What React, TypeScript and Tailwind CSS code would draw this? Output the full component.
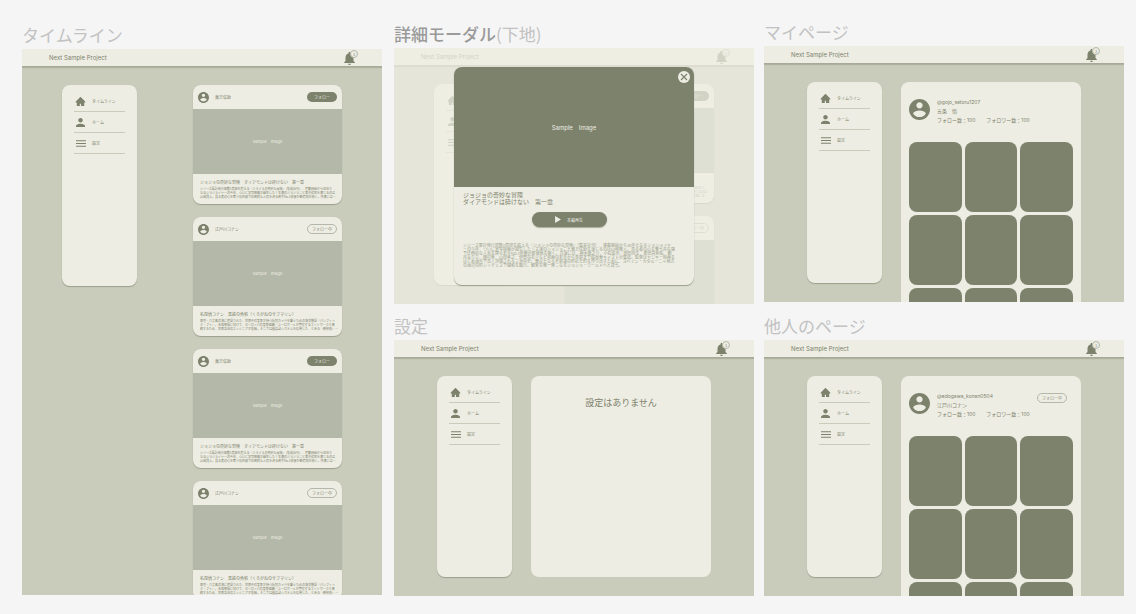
import type { ReactNode } from "react";
import { AiFillHome } from "react-icons/ai";

const JOJO_TITLE = "ジョジョの奇妙な冒険　ダイアモンドは砕けない　第一章";
const JOJO_LEAD =
  "シリーズ累計発行部数1億部を超える『ジョジョの奇妙な冒険』（集英社刊）、連載開始から30年と\nなるジョジョイヤーの今年、ついに実写映画が誕生した！主演のジョジョこと東方仗助を演じるのは\n山﨑賢人。見る者の心を奪う存在感で圧倒的な人気を誇る若手No.1俳優が新境地を開く。共演には…";
const JOJO_FULL =
  "シリーズ累計発行部数1億部を超える『ジョジョの奇妙な冒険』（集英社刊）、連載開始から30年となるジョジョイヤーの今年、ついに実写映画が誕生した！主演のジョジョこと東方仗助を演じるのは山﨑賢人。見る者の心を奪う存在感で圧倒的な人気を誇る若手No.1俳優が新境地を開く。共演には、神木隆之介、小松菜奈、岡田将生、新田真剣佑、観月ありさ、國村隼、山田孝之、伊勢谷友介など邦画の若手から重鎮まで超豪華キャストが集結。監督はヤンキー映画をはじめ海外で高く評価される三池崇史。舞台となる不思議の町杜王町を作り出すために、スペイン・カタルーニャ地方の海辺の町シッチェスで撮影を敢行。観客を唯一無二なるジョジョ・ワールドへと誘う。";
const CONAN_TITLE = "名探偵コナン　黒鉄の魚影（くろがねのサブマリン）";
const CONAN_LEAD =
  "東京・八丈島近海に建設された、世界中の警察が持つ防犯カメラを繋ぐための海洋施設『パシフィッ\nク・ブイ』。本格稼働に向けて、ヨーロッパの警察組織・ユーロポールが管理するネットワークと接\n続するため、世界各国のエンジニアが集結。そこでは顔認証システムを応用した、とある『新技術』…";

type Post = { user: string; following: boolean; title?: string; lead?: string };

const jojo: Post = { user: "東方仗助", following: false, title: JOJO_TITLE, lead: JOJO_LEAD };
const conan: Post = { user: "江戸川コナン", following: true, title: CONAN_TITLE, lead: CONAN_LEAD };
const posts: Post[] = [jojo, conan, jojo, conan];
const backdropPosts: Post[] = [jojo, { user: "江戸川コナン", following: true }];

function AvatarIcon({ className }: { className: string }) {
  return (
    <svg viewBox="2 2 20 20" fill="currentColor" className={className} aria-hidden="true">
      <path d="M12 2C6.48 2 2 6.48 2 12s4.48 10 10 10 10-4.48 10-10S17.52 2 12 2zm0 3c1.66 0 3 1.34 3 3s-1.34 3-3 3-3-1.34-3-3 1.34-3 3-3zm0 14.2a7.2 7.2 0 0 1-6-3.22c.03-1.99 4-3.08 6-3.08 1.99 0 5.97 1.09 6 3.08a7.2 7.2 0 0 1-6 3.22z" />
    </svg>
  );
}

function PersonIcon() {
  return (
    <svg viewBox="4 4 16 16" fill="currentColor" className="size-[9px]" aria-hidden="true">
      <path d="M12 12c2.21 0 4-1.79 4-4s-1.79-4-4-4-4 1.79-4 4 1.79 4 4 4zm0 2c-2.67 0-8 1.34-8 4v2h16v-2c0-2.66-5.33-4-8-4z" />
    </svg>
  );
}

function MenuIcon() {
  return (
    <svg viewBox="3 6 18 12" fill="currentColor" className="h-[7px] w-[10px]" aria-hidden="true">
      <path d="M3 18h18v-2H3v2zm0-5h18v-2H3v2zm0-7v2h18V6H3z" />
    </svg>
  );
}

function BellIcon() {
  return (
    <svg viewBox="4 2.5 16 19.5" fill="currentColor" className="h-[13px] w-[11px]" aria-hidden="true">
      <path d="M12 22c1.1 0 2-.9 2-2h-4c0 1.1.89 2 2 2zm6-6v-5c0-3.07-1.64-5.64-4.5-6.32V4c0-.83-.67-1.5-1.5-1.5s-1.5.67-1.5 1.5v.68C7.63 5.36 6 7.92 6 11v5l-2 2v1h16v-1l-2-2z" />
    </svg>
  );
}

function Board({ title, tall, children }: { title: ReactNode; tall?: boolean; children: ReactNode }) {
  return (
    <section className="flex flex-col gap-[3px]">
      <h2 className="h-5 text-[17px] leading-[18px] whitespace-nowrap text-[#c2c2c2]">{title}</h2>
      <div
        className={
          tall
            ? "relative aspect-[360/546] overflow-hidden bg-[#c9ccbb]"
            : "relative aspect-[360/256] overflow-hidden bg-[#c9ccbb]"
        }
      >
        {children}
      </div>
    </section>
  );
}

function Header() {
  return (
    <header className="flex h-[18px] items-center justify-between border-b border-[#a7aa99] bg-[#edede3] px-[27px] shadow-[0_1px_1px_rgba(125,130,109,0.35)]">
      <a href="#top" className="font-[Inter,sans-serif] text-[6px] leading-[8px]">
        Next Sample Project
      </a>
      <button type="button" aria-label="通知" className="relative flex w-[11px] pt-[2px]">
        <BellIcon />
        <span className="absolute top-0 left-[6px] flex size-2 items-center justify-center rounded-full border border-[#b4b8a8] bg-[#edede3] text-[4px] leading-none">
          1
        </span>
      </button>
    </header>
  );
}

function SideItem({ icon, label }: { icon: ReactNode; label: string }) {
  return (
    <li className="border-b border-[#c9ccbb]">
      <a href="#top" className="flex h-5 items-center gap-[5px]">
        <span className="flex w-[13px] justify-center">{icon}</span>
        <span className="text-[4px] leading-[6px]">{label}</span>
      </a>
    </li>
  );
}

function Sidebar() {
  return (
    <nav className="h-[201px] w-[75px] shrink-0 rounded-lg bg-[#edede3] px-3 pt-[6px] shadow-[0_1px_1px_rgba(125,130,109,0.6)]">
      <ul>
        <SideItem icon={<AiFillHome className="size-[11px]" />} label="タイムライン" />
        <SideItem icon={<PersonIcon />} label="ホーム" />
        <SideItem icon={<MenuIcon />} label="設定" />
      </ul>
    </nav>
  );
}

function FollowButton({ following }: { following: boolean }) {
  return (
    <button
      type="button"
      className={
        following
          ? "h-[10px] w-[30px] rounded-full border border-[#b4b8a8] text-center text-[4px] leading-[8px]"
          : "h-[10px] w-[30px] rounded-full bg-[#7d826d] text-center text-[4px] leading-[10px] text-[#edede3]"
      }
    >
      {following ? "フォロー中" : "フォロー"}
    </button>
  );
}

function PostCard({ post }: { post: Post }) {
  return (
    <article className="h-[119px] shrink-0 overflow-hidden rounded-lg bg-[#edede3] shadow-[0_1px_1px_rgba(125,130,109,0.6)]">
      <div className="flex h-6 items-center gap-[6px] px-[5px]">
        <AvatarIcon className="size-[11px]" />
        <span className="grow text-[4px] leading-[6px]">{post.user}</span>
        <FollowButton following={post.following} />
      </div>
      <div className="flex h-[65px] items-center justify-center bg-[#b4b8a8] font-[Inter,sans-serif] text-[4px] whitespace-pre text-[#edede3]">
        {"Sample　Image"}
      </div>
      {post.title && (
        <div className="px-[7px] pt-[5px]">
          <h3 className="text-[4px] leading-[6px] whitespace-nowrap">{post.title}</h3>
          <p className="pt-[2px] text-[3px] leading-[4px] whitespace-pre">{post.lead}</p>
        </div>
      )}
    </article>
  );
}

function Timeline({ items }: { items: Post[] }) {
  return (
    <>
      <Header />
      <main className="flex items-start justify-between px-10 pt-[18px]">
        <Sidebar />
        <div className="flex w-[149px] flex-col gap-[13px]">
          {items.map((post, i) => (
            <PostCard key={i} post={post} />
          ))}
        </div>
      </main>
    </>
  );
}

function DetailModal() {
  return (
    <div className="absolute inset-0 flex items-start justify-center bg-[#edede3]/75 pt-[19px]">
      <div
        role="dialog"
        aria-label="ジョジョの奇妙な冒険"
        className="relative h-[218px] w-[240px] overflow-hidden rounded-lg bg-[#edede3] shadow-[0_1px_1px_rgba(125,130,109,0.7)]"
      >
        <div className="flex h-[120px] items-center justify-center bg-[#7d826d] font-[Inter,sans-serif] text-[6px] whitespace-pre text-[#edede3]">
          {"Sample　Image"}
        </div>
        <button
          type="button"
          aria-label="閉じる"
          className="absolute top-1 right-1 flex size-3 items-center justify-center rounded-full bg-[#edede3]"
        >
          <svg viewBox="0 0 12 12" className="size-3" fill="none" stroke="currentColor" strokeWidth="1.2" aria-hidden="true">
            <path d="M3 3l6 6M9 3l-6 6" />
          </svg>
        </button>
        <div className="flex flex-col pt-[4px] pr-[19px] pl-[9px]">
          <h3 className="text-[6px] leading-[7px]">
            ジョジョの奇妙な冒険
            <br />
            ダイアモンドは砕けない　第一章
          </h3>
          <button
            type="button"
            className="mt-[7px] flex h-[15px] w-[75px] items-center justify-center gap-[6px] self-center rounded-full bg-[#7d826d] text-[4px] leading-[6px] text-[#edede3] shadow-[0_1px_1px_rgba(125,130,109,0.6)]"
          >
            <svg viewBox="0 0 5 6" className="h-[7px] w-[6px]" fill="currentColor" aria-hidden="true">
              <path d="M0 0l5 3-5 3z" />
            </svg>
            本編再生
          </button>
          <p className="pt-[16px] text-[4px] leading-[4px] text-[#999d8b]">{JOJO_FULL}</p>
        </div>
      </div>
    </div>
  );
}

function Page({ children }: { children: ReactNode }) {
  return (
    <>
      <Header />
      <main className="flex items-start justify-center gap-[19px] pt-[18px]">
        <Sidebar />
        {children}
      </main>
    </>
  );
}

function Profile({ handle, name, following }: { handle: string; name: string; following?: boolean }) {
  return (
    <div className="w-[180px] shrink-0 rounded-t-lg bg-[#edede3] px-2">
      <div className="flex h-[60px] items-start gap-[7px] pt-[16px] pr-[6px]">
        <AvatarIcon className="mt-px size-[21px] shrink-0" />
        <div className="grow font-[Inter,'Noto_Sans_CJK_JP',sans-serif] text-[5px] leading-[9px] whitespace-nowrap">
          <p>{handle}</p>
          <p>{name}</p>
          <p className="flex gap-[11px]">
            <span>フォロー数：100</span>
            <span>フォロワー数：100</span>
          </p>
        </div>
        {following && (
          <div className="-ml-[30px] flex w-[30px] shrink-0 pt-px">
            <FollowButton following />
          </div>
        )}
      </div>
      <ul className="grid grid-cols-3 gap-[3px]">
        {Array.from({ length: 9 }, (_, i) => (
          <li key={i} className="h-[70px] rounded-lg bg-[#7d826d]" />
        ))}
      </ul>
    </div>
  );
}

export default function App() {
  return (
    <div
      id="top"
      lang="ja"
      className="flex min-h-screen gap-[10px] bg-[#f5f5f5] pr-3 pb-[18px] pl-[22px] font-['Noto_Sans_CJK_JP',sans-serif] text-[#7d826d]"
    >
      <div className="mr-[2px] min-w-0 flex-1 pt-[26px]">
        <Board title="タイムライン" tall>
          <Timeline items={posts} />
        </Board>
      </div>

      <div className="flex min-w-0 flex-1 flex-col gap-[13px] pt-[25px]">
        <Board
          title={
            <>
              <span className="font-medium text-[#9a9a9a]">詳細モーダル</span>(下地)
            </>
          }
        >
          <Timeline items={backdropPosts} />
          <DetailModal />
        </Board>
        <Board title="設定">
          <Page>
            <div className="h-[201px] w-[180px] rounded-lg bg-[#edede3] pt-[21px] text-center text-[9px] leading-[12px]">
              設定はありません
            </div>
          </Page>
        </Board>
      </div>

      <div className="flex min-w-0 flex-1 flex-col gap-[15px] pt-[23px]">
        <Board title="マイページ">
          <Page>
            <Profile handle="@gojo_satoru1207" name="五条　悟" />
          </Page>
        </Board>
        <Board title="他人のページ">
          <Page>
            <Profile handle="@edogawa_konan0504" name="江戸川コナン" following />
          </Page>
        </Board>
      </div>
    </div>
  );
}
